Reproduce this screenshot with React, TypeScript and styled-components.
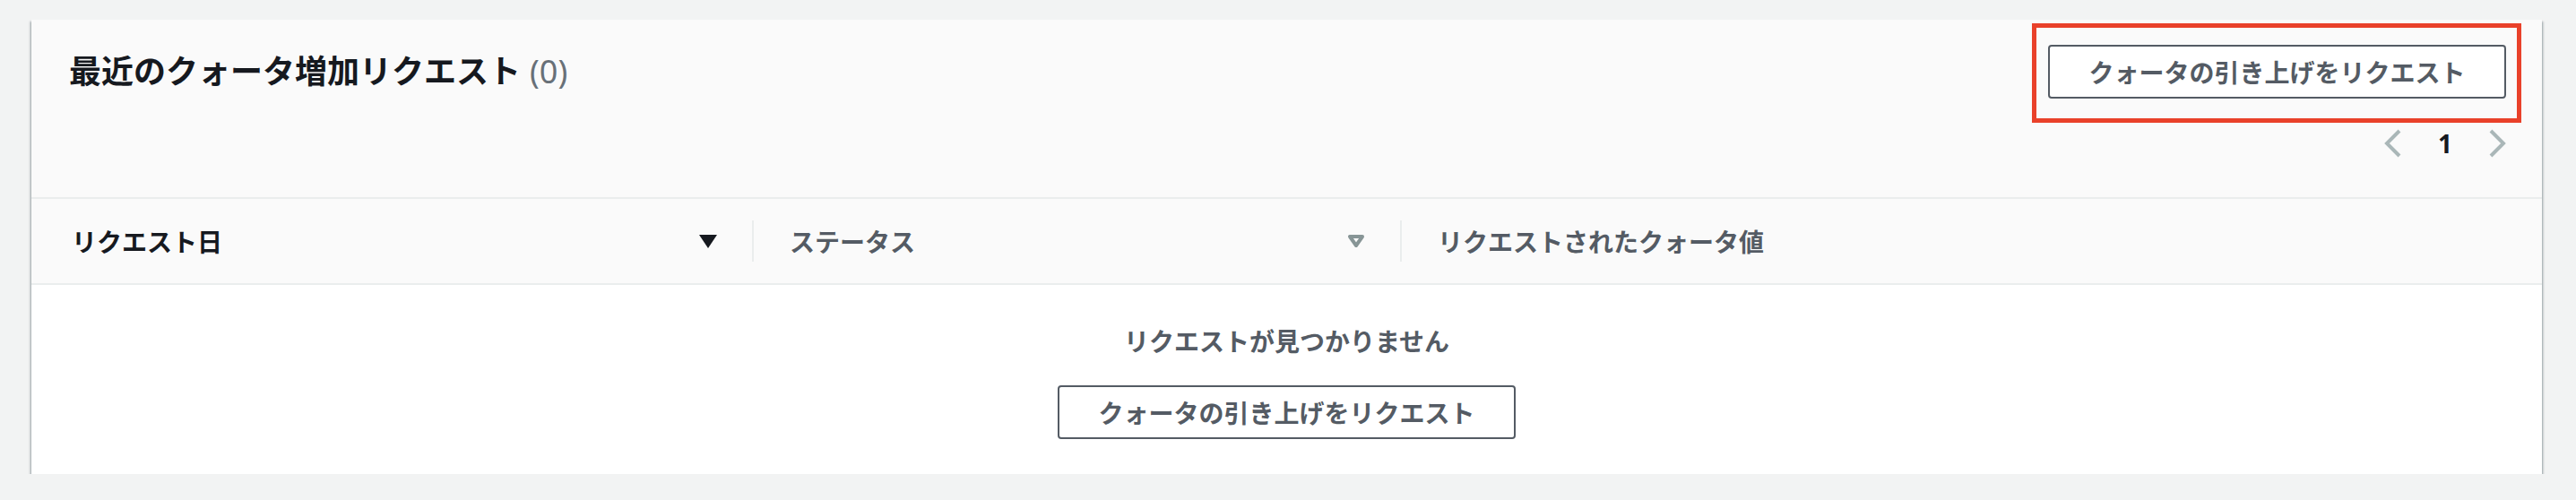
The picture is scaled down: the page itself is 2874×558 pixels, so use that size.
import React from "react";
import styled, { createGlobalStyle } from "styled-components";

const GlobalStyle = createGlobalStyle`
  html, body {
    margin: 0;
    padding: 0;
    background: #f2f3f3;
  }
  body {
    font-family: "Noto Sans", "Noto Sans CJK JP", sans-serif;
    color: #16191f;
  }
`;

const Page = styled.div`
  padding: 22px 38px 0 35px;
`;

const Card = styled.section`
  background: #ffffff;
  box-shadow: 0 2px 2px 0 rgba(0, 28, 36, 0.45), 2px 2px 2px 0 rgba(0, 28, 36, 0.15),
    -2px 2px 2px 0 rgba(0, 28, 36, 0.15);
`;

const Header = styled.header`
  background: #fafafa;
  border-bottom: 2px solid #eaeded;
  padding: 28px 40px 38px 42px;
  display: flex;
  flex-direction: column;
  gap: 28px;
`;

const TitleRow = styled.div`
  display: flex;
  align-items: center;
  justify-content: space-between;
  height: 60px;
`;

const Title = styled.h2`
  margin: 0;
  font-size: 36px;
  line-height: 44px;
  font-weight: 700;
  color: #16191f;
  display: flex;
  align-items: center;
`;

const Count = styled.span`
  font-weight: 400;
  color: #687078;
  margin-left: 10px;
`;

const Annotated = styled.div`
  position: relative;
`;

const Highlight = styled.div`
  position: absolute;
  top: -24px;
  left: -18px;
  right: -17px;
  bottom: -27px;
  border: 5px solid #e9412a;
  pointer-events: none;
`;

const Button = styled.button`
  box-sizing: border-box;
  height: 60px;
  width: 511px;
  padding: 0;
  border: 2px solid #545b64;
  border-radius: 4px;
  background: #ffffff;
  color: #545b64;
  font-family: "Noto Sans CJK JP", sans-serif;
  font-size: 28px;
  font-weight: 700;
  line-height: 36px;
  cursor: pointer;
`;

const PagerRow = styled.div`
  display: flex;
  justify-content: flex-end;
  height: 44px;
  align-items: center;
`;

const Pager = styled.nav`
  display: flex;
  align-items: center;
  gap: 40px;
`;

const PageNum = styled.span`
  font-size: 28px;
  font-weight: 700;
  color: #16191f;
  line-height: 36px;
`;

const Chevron = ({ dir }: { dir: "left" | "right" }) => (
  <svg width="20" height="32" viewBox="0 0 20 32" fill="none">
    <polyline
      points={dir === "left" ? "17,2 3,16 17,30" : "3,2 17,16 3,30"}
      stroke="#aab7b8"
      strokeWidth="4"
      strokeLinejoin="miter"
    />
  </svg>
);

const HeadRow = styled.div`
  display: flex;
  align-items: center;
  height: 94px;
  background: #fafafa;
  border-bottom: 2px solid #eaeded;
`;

const HeadCell = styled.div<{ $w?: number; $first?: boolean; $active?: boolean }>`
  box-sizing: border-box;
  ${(p) => (p.$w ? `width: ${p.$w}px; flex: none;` : "flex: 1;")}
  padding: 0 39px 0 ${(p) => (p.$first ? 45 : 40)}px;
  display: flex;
  align-items: center;
  justify-content: space-between;
  font-family: "Noto Sans CJK JP", sans-serif;
  font-size: 28px;
  font-weight: 700;
  line-height: 36px;
  color: ${(p) => (p.$active ? "#16191f" : "#545b64")};
`;

const Divider = styled.span`
  width: 2px;
  height: 46px;
  background: #eaeded;
  flex: none;
`;

const SortIcon = ({ active }: { active?: boolean }) => (
  <svg width="20" height="16" viewBox="0 0 20 16">
    {active ? (
      <polygon points="0,1 20,1 10,16" fill="#16191f" />
    ) : (
      <polygon
        points="3,3 17,3 10,13"
        fill="none"
        stroke="#879596"
        strokeWidth="4"
        strokeLinejoin="round"
      />
    )}
  </svg>
);

const Empty = styled.div`
  display: flex;
  flex-direction: column;
  align-items: center;
  gap: 32px;
  padding: 44px 0 39px;
  background: #ffffff;
`;

const EmptyText = styled.p`
  margin: 0;
  font-family: "Noto Sans CJK JP", sans-serif;
  font-size: 28px;
  font-weight: 700;
  line-height: 36px;
  color: #545b64;
`;

export default function App() {
  return (
    <>
      <GlobalStyle />
      <Page>
        <Card>
          <Header>
            <TitleRow>
              <Title>
                最近のクォータ増加リクエスト<Count>(0)</Count>
              </Title>
              <Annotated>
                <Button>クォータの引き上げをリクエスト</Button>
                <Highlight />
              </Annotated>
            </TitleRow>
            <PagerRow>
              <Pager>
                <Chevron dir="left" />
                <PageNum>1</PageNum>
                <Chevron dir="right" />
              </Pager>
            </PagerRow>
          </Header>
          <HeadRow>
            <HeadCell $w={804} $first $active>
              <span>リクエスト日</span>
              <SortIcon active />
            </HeadCell>
            <Divider />
            <HeadCell $w={721}>
              <span>ステータス</span>
              <SortIcon />
            </HeadCell>
            <Divider />
            <HeadCell>
              <span>リクエストされたクォータ値</span>
            </HeadCell>
          </HeadRow>
          <Empty>
            <EmptyText>リクエストが見つかりません</EmptyText>
            <Button>クォータの引き上げをリクエスト</Button>
          </Empty>
        </Card>
      </Page>
    </>
  );
}
